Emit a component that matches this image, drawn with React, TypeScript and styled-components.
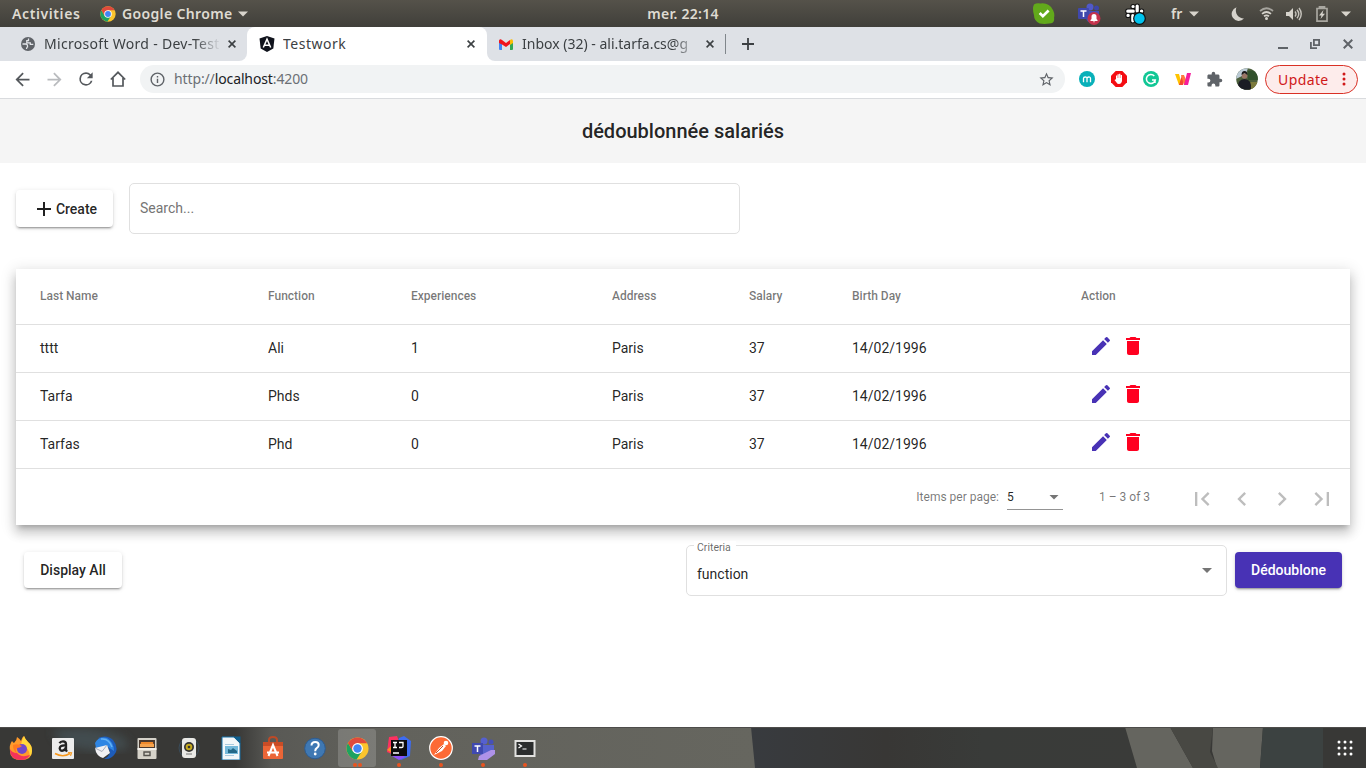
import React from "react";
import styled, { createGlobalStyle } from "styled-components";

const GlobalStyle = createGlobalStyle`
  * { box-sizing: border-box; }
  body { margin: 0; overflow: hidden; background: #fff; }
`;

const system = `"Noto Sans", "Open Sans", sans-serif`;

const Desktop = styled.div`
  width: 1366px;
  height: 768px;
  display: flex;
  flex-direction: column;
  font-family: Roboto, sans-serif;
  color: rgba(0, 0, 0, 0.87);
`;

const Icon = styled.svg<{ $ml?: number }>`
  display: block;
  flex: none;
  margin-left: ${(p) => p.$ml ?? 0}px;
`;

const Label = styled.span<{ $w?: number; $ml?: number; $ls?: number }>`
  flex: none;
  display: block;
  white-space: pre;
  width: ${(p) => (p.$w ? `${p.$w}px` : "auto")};
  margin-left: ${(p) => p.$ml ?? 0}px;
  letter-spacing: ${(p) => p.$ls ?? 0}px;
`;

/* ---------- desktop top bar ---------- */

const TopBar = styled.header`
  height: 27px;
  flex: none;
  display: grid;
  grid-template-columns: 1fr auto 1fr;
  align-items: center;
  background: linear-gradient(#55524a, #403f3a);
  color: #dfdbd2;
  font: 600 14px/26px ${system};
`;

const BarGroup = styled.div<{ $end?: boolean }>`
  display: flex;
  align-items: center;
  height: 27px;
  justify-content: ${(p) => (p.$end ? "flex-end" : "flex-start")};
  padding: ${(p) => (p.$end ? "0 15px 0 0" : "0 0 0 12px")};
`;

/* ---------- browser window ---------- */

const TabStrip = styled.div`
  height: 34px;
  flex: none;
  display: flex;
  background: #fff;
  color: #3c4043;
  font: 400 14px/34px ${system};
`;

const Tab = styled.div<{ $w: number; $active?: boolean; $side?: "before" | "after" }>`
  width: ${(p) => p.$w}px;
  height: 34px;
  flex: none;
  display: flex;
  align-items: center;
  background: ${(p) => (p.$active ? "#fff" : "#dee1e6")};
  border-radius: ${(p) => (p.$active ? "8px 8px 0 0" : p.$side === "before" ? "0 0 8px 0" : "0 0 0 8px")};
`;

const ActiveTabBacking = styled.div`
  display: flex;
  background: linear-gradient(#dee1e6 50%, #fff 50%);
`;

const StripRest = styled.div`
  flex: 1;
  display: flex;
  background: #dee1e6;
`;

const TabTitle = styled.span<{ $w: number; $ml: number; $ls?: number; $fade?: boolean }>`
  width: ${(p) => p.$w}px;
  margin-left: ${(p) => p.$ml}px;
  letter-spacing: ${(p) => p.$ls ?? 0}px;
  flex: none;
  overflow: hidden;
  white-space: nowrap;
  ${(p) => p.$fade && "mask-image: linear-gradient(90deg, #000 86%, transparent 101%);"}
`;

const TabDivider = styled.i`
  width: 1px;
  height: 20px;
  margin: 7px 0 0 7px;
  background: #80868b;
`;

const WindowButtons = styled.div`
  margin-left: auto;
  display: flex;
  align-items: center;
  padding-right: 13px;
`;

const Toolbar = styled.div`
  height: 38px;
  flex: none;
  display: flex;
  align-items: center;
  padding-bottom: 1px;
  border-bottom: 1px solid #d9dbde;
  background: #fff;
`;

const AddressBar = styled.div`
  width: 925px;
  height: 28px;
  margin-left: 14px;
  border-radius: 14px;
  background: #f1f3f4;
  display: flex;
  align-items: center;
  color: #6b6f74;
  font: 400 14px/28px ${system};
  b { font-weight: 400; color: #202124; }
`;

const UpdateButton = styled.div`
  width: 93px;
  height: 29px;
  margin-left: 7px;
  border: 1px solid #d93025;
  border-radius: 15px;
  background: #fdeceb;
  color: #d01818;
  display: flex;
  align-items: center;
  font: 400 14px/27px ${system};
`;

/* ---------- web page ---------- */

const PageTitle = styled.h1`
  height: 64px;
  flex: none;
  margin: 0;
  background: #f5f5f5;
  text-align: center;
  font: 500 20px/64px Roboto, sans-serif;
`;

const Page = styled.main`
  height: 564px;
  flex: none;
  padding: 20px 16px 0;
  background: #fff;
  font-size: 14px;
`;

const SearchRow = styled.div`
  display: flex;
  align-items: center;
  gap: 16px;
`;

const raised = `0 3px 1px -2px rgba(0,0,0,.2), 0 2px 2px 0 rgba(0,0,0,.14), 0 1px 5px 0 rgba(0,0,0,.12)`;

const Button = styled.button<{ $w: number; $h?: number; $primary?: boolean }>`
  width: ${(p) => p.$w}px;
  height: ${(p) => p.$h ?? 36}px;
  flex: none;
  display: flex;
  align-items: center;
  justify-content: center;
  padding: 0;
  border: 0;
  border-radius: 4px;
  background: ${(p) => (p.$primary ? "#4832b5" : "#fff")};
  color: ${(p) => (p.$primary ? "#fff" : "rgba(0,0,0,.87)")};
  box-shadow: ${raised};
  font: 500 14px/36px Roboto, sans-serif;
`;

const SearchField = styled.div`
  width: 611px;
  height: 51px;
  padding: 0 10px;
  border: 1px solid #e0e0e0;
  border-radius: 5px;
  line-height: 49px;
  color: #757575;
`;

const Card = styled.section`
  margin-top: 35px;
  height: 256px;
  background: #fff;
  box-shadow: 0 5px 5px -3px rgba(0,0,0,.2), 0 8px 10px 1px rgba(0,0,0,.14), 0 3px 14px 2px rgba(0,0,0,.12);
`;

const Row = styled.div<{ $head?: boolean }>`
  height: ${(p) => (p.$head ? 56 : 48)}px;
  display: grid;
  grid-template-columns: 228px 143px 201px 137px 103px 229px 1fr;
  align-items: center;
  padding: 0 24px 2px;
  border-bottom: 1px solid #e0e0e0;
  ${(p) => p.$head && "font-size: 12px; font-weight: 500; color: rgba(0,0,0,.54);"}
`;

const Actions = styled.div`
  display: flex;
  gap: 8px;
  padding: 0 0 4px 8px;
`;

const Paginator = styled.div`
  height: 56px;
  display: flex;
  align-items: center;
  justify-content: flex-end;
  padding-right: 14px;
  font-size: 12px;
  color: rgba(0, 0, 0, 0.54);
`;

const PageButtons = styled.div`
  display: flex;
  gap: 12px;
  padding: 4px 0 0 10px;
`;

const PageSize = styled.div`
  width: 56px;
  height: 25px;
  margin: 0 0 0 8px;
  display: flex;
  align-items: center;
  justify-content: space-between;
  padding: 1px 4px 0 0;
  border-bottom: 1px solid #949494;
  color: rgba(0, 0, 0, 0.87);
`;

const FooterRow = styled.div`
  display: flex;
  align-items: flex-start;
  padding: 27px 8px 0;
`;

const Select = styled.div`
  position: relative;
  width: 541px;
  height: 51px;
  margin: -7px 8px 0 auto;
  display: flex;
  align-items: center;
  justify-content: space-between;
  padding: 7px 14px 0 10px;
  border: 1px solid #e0e0e0;
  border-radius: 5px;
`;

const FloatingLabel = styled.span`
  position: absolute;
  left: 7px;
  top: -5px;
  width: 42px;
  padding-left: 3px;
  background: #fff;
  font-size: 10.5px;
  line-height: 14px;
  color: rgba(0, 0, 0, 0.6);
`;

const SelectArrow = styled.i<{ $up?: number }>`
  width: 10px;
  height: 5px;
  margin-bottom: ${(p) => p.$up ?? 0}px;
  background: #757575;
  clip-path: polygon(0 0, 100% 0, 50% 100%);
`;

/* ---------- dock ---------- */

const Dock = styled.footer`
  position: relative;
  height: 41px;
  flex: none;
  display: flex;
  gap: 4px;
  padding: 2px 0 0 2px;
  background: #383836;
`;

const Wallpaper = styled.svg`
  position: absolute;
  inset: 0;
`;

const DockSlot = styled.div<{ $active?: boolean }>`
  position: relative;
  width: 38px;
  height: 38px;
  display: flex;
  align-items: center;
  justify-content: center;
  border-radius: 3px;
  background: ${(p) => (p.$active ? "rgba(255,255,255,.17)" : "transparent")};
`;

const RunningDots = styled.div`
  position: absolute;
  left: 0;
  right: 0;
  bottom: 0;
  display: flex;
  justify-content: center;
  gap: 1px;
  i { width: 4px; height: 4px; border-radius: 2px; background: #e95420; }
`;

const AppsButton = styled.div`
  position: relative;
  margin: 11px 13px 0 auto;
`;

const Chrome = ({ size, ml }: { size: number; ml?: number }) => (
  <Icon $ml={ml} width={size} height={size} viewBox="0 0 48 48">
    <circle cx="24" cy="24" r="23" fill="#fbc52d" />
    <path d="M4.100 12.500A23 23 0 0 0 22 46.900L33 30 24 24 14 29z" fill="#1da261" />
    <path d="M4.100 12.500 14 29.500 24 13H44L43.900 12.500A23 23 0 0 0 4.100 12.500z" fill="#df4a3c" />
    <circle cx="24" cy="24" r="11.300" fill="#fff" />
    <circle cx="24" cy="24" r="8.800" fill="#4285f4" />
  </Icon>
);

const Caret = ({ ml }: { ml: number }) => (
  <Icon $ml={ml} width="10" height="6" viewBox="0 0 10 6">
    <path d="M0 .5h10L5 5.500z" fill="#d8d4cc" />
  </Icon>
);

const Close = ({ ml, size = 8, color = "#3c4043" }: { ml: number; size?: number; color?: string }) => (
  <Icon $ml={ml} width={size} height={size} viewBox="0 0 8 8">
    <path d="m.6.6 6.800 6.800m0-6.800L.6 7.400" stroke={color} strokeWidth="1.600" />
  </Icon>
);

const Glyph = ({ d, color, size = 24, ml }: { d: string; color: string; size?: number; ml?: number }) => (
  <Icon $ml={ml} width={size} height={size} viewBox="0 0 24 24">
    <path d={d} fill={color} />
  </Icon>
);

const paths = {
  back: "M20 11H7.830l5.590-5.590L12 4l-8 8 8 8 1.410-1.410L7.830 13H20v-2z",
  forward: "M12 4l-1.410 1.410L16.170 11H4v2h12.170l-5.580 5.590L12 20l8-8z",
  reload:
    "M17.650 6.350A7.960 7.960 0 0 0 12 4a8 8 0 1 0 7.730 10h-2.080A6 6 0 1 1 12 6c1.660 0 3.140.69 4.220 1.780L13 11h7V4l-2.350 2.350z",
  info: "M11 7h2v2h-2zm0 4h2v6h-2zm1-9a10 10 0 1 0 0 20 10 10 0 0 0 0-20zm0 18a8 8 0 1 1 0-16 8 8 0 0 1 0 16z",
  star: "M22 9.240l-7.190-.62L12 2 9.190 8.630 2 9.240l5.460 4.730L5.820 21 12 17.270 18.180 21l-1.630-7.030L22 9.240zM12 15.400l-3.760 2.270 1-4.280-3.320-2.880 4.380-.38L12 6.100l1.710 4.040 4.380.38-3.320 2.880 1 4.280L12 15.400z",
  puzzle:
    "M20.500 11H19V7c0-1.100-.9-2-2-2h-4V3.500a2.500 2.500 0 0 0-5 0V5H4c-1.100 0-2 .9-2 2v3.800h1.500a2.700 2.700 0 0 1 0 5.400H2V20c0 1.100.9 2 2 2h3.800v-1.500a2.700 2.700 0 0 1 5.400 0V22H17c1.100 0 2-.9 2-2v-4h1.500a2.500 2.500 0 0 0 0-5z",
  plus: "M19 13h-6v6h-2v-6H5v-2h6V5h2v6h6v2z",
  edit: "M3 17.250V21h3.750L17.810 9.940l-3.750-3.750L3 17.250zM20.710 7.040a1 1 0 0 0 0-1.410l-2.340-2.340a1 1 0 0 0-1.410 0l-1.830 1.830 3.750 3.750 1.830-1.830z",
  trash: "M6 19c0 1.100.9 2 2 2h8c1.100 0 2-.9 2-2V7H6v12zM19 4h-3.500l-1-1h-5l-1 1H5v2h14V4z",
  first: "M18.410 16.590L13.820 12l4.590-4.590L17 6l-6 6 6 6zM6 6h2v12H6z",
  prev: "M15.410 7.410L14 6l-6 6 6 6 1.410-1.410L10.830 12z",
  next: "M10 6L8.590 7.410 13.170 12l-4.580 4.590L10 18l6-6z",
  last: "M5.590 7.410L10.180 12l-4.590 4.590L7 18l6-6-6-6zM16 6h2v12h-2z",
};

const TrayIcons = () => (
  <>
    <Icon width="22" height="23" viewBox="0 0 23 23">
      <path d="M1 2Q4 0 8 1q9-1 13 7 2 4 1 8 1 6-5 6-5 1-10 0-6-3-6-9Q-1 6 1 2z" fill="#62a91b" />
      <path d="m7 11 3.300 3.300 6-6" fill="none" stroke="#fff" strokeWidth="2.800" />
    </Icon>
    <Icon $ml={23} width="23" height="22" viewBox="0 0 23 22">
      <circle cx="12" cy="4" r="3.500" fill="#5059c9" />
      <circle cx="18.500" cy="5" r="2.500" fill="#3d46a8" />
      <path d="M8 8h13v6q-2 6-8 6-5-1-5-6z" fill="#4450b5" />
      <rect y="5" width="11" height="11" rx="1" fill="#4048ad" />
      <path d="M2.500 8h6M5.500 8v6" stroke="#fff" strokeWidth="1.500" />
      <circle cx="16" cy="15.500" r="6.500" fill="#c4314b" />
      <path d="M12.500 18v-1l1-1v-2.500a2.500 2.500 0 0 1 5 0V16l1 1v1zm2.300.6h2.400l-1.200 1z" fill="#fff" />
    </Icon>
    <Icon $ml={24} width="22" height="22" viewBox="0 0 22 22">
      {["#111", "#fff"].map((c, i) => (
        <path
          key={c}
          d="M2.800 8.200h5.400M8 3.500h.1M12.200 3v5M16.500 8.200h.2M3 12.400h.2M7.800 12.600v5.200M12 12.500h5"
          stroke={c}
          strokeWidth={i ? 3.200 : 5.200}
          strokeLinecap="round"
        />
      ))}
      <circle cx="14.500" cy="15.500" r="5.800" fill="#00c3ee" stroke="#111" strokeWidth="1.200" />
    </Icon>
  </>
);

const StatusIcons = () => (
  <>
    <Icon $ml={32} width="13" height="14" viewBox="0 0 13 14">
      <path d="M5.500.3A7 7 0 1 0 13 11.500 8 8 0 0 1 5.500.3z" fill="#d6d3cc" />
    </Icon>
    <Icon $ml={15} width="15" height="13" viewBox="0 0 15 13" fill="none" strokeWidth="1.700">
      <path d="M1 4q6.500-5.500 13 0" stroke="#a5a39d" />
      <path d="M3 6.800q4.500-3.600 9 0M5 9.200q2.500-1.800 5 0" stroke="#d6d3cc" />
      <circle cx="7.500" cy="11.400" r="1.500" fill="#d6d3cc" />
    </Icon>
    <Icon $ml={12} width="16" height="14" viewBox="0 0 16 14">
      <path d="M0 5h3l4-4v12L3 9H0z" fill="#d6d3cc" />
      <path d="M9 4.500q2 2.500 0 5M11 2.800q3.500 4.200 0 8.400M13 1q4.500 6 0 12" fill="none" stroke="#c6c3bc" strokeWidth="1.400" />
    </Icon>
    <Icon $ml={14} width="12" height="16" viewBox="0 0 12 16">
      <path d="M3.500 2V.8h5V2M1 2.500h10v12.700H1z" fill="none" stroke="#a9a7a0" strokeWidth="1.700" />
      <path d="M7.500 4 3 9.500h2.500L4.500 13 9 7.800H6.500z" fill="#d6d3cc" />
    </Icon>
  </>
);

const Extensions = () => (
  <>
    <Icon $ml={14} width="16" height="16" viewBox="0 0 16 16">
      <circle cx="8" cy="8" r="8" fill="#08b0b9" />
      <path d="M4.500 11.300V7.300Q4.500 6 6.300 6T8 7.500v3.800M8 7.500Q8 6 9.800 6t1.700 1.500v3.800" fill="none" stroke="#fff" strokeWidth="1.300" />
    </Icon>
    <Icon $ml={16} width="16" height="16" viewBox="0 0 16 16">
      <path d="M4.700 0h6.600L16 4.700v6.600L11.300 16H4.700L0 11.300V4.700z" fill="#f40d12" />
      <path d="M5 8V4.500h1.200V7h.3V3.300h1.300V7h.3V2.800h1.300V7h.3V4h1.300v6q-.6 3-3 3-1.800 0-2.500-1.500L3.500 9l1-.6z" fill="#fff" />
    </Icon>
    <Icon $ml={16} width="16" height="16" viewBox="0 0 16 16">
      <circle cx="8" cy="8" r="8" fill="#11c795" />
      <path d="M11.300 5A4.500 4.500 0 1 0 12.300 9H9M12 8.800V12" fill="none" stroke="#fff" strokeWidth="1.500" />
    </Icon>
    <Icon $ml={16} width="16" height="13" viewBox="0 0 16 13">
      <path d="M0 1h4l3 11H4z" fill="#ffc400" />
      <path d="M4 12 7 2l2.500 3L8 12z" fill="#f4472e" />
      <path d="M6 2h3l4 10H9z" fill="#ff7a3c" />
      <path d="M12 0h4l-3 12H9z" fill="#f51d9c" />
    </Icon>
    <Glyph ml={15} size={17} d={paths.puzzle} color="#5f6368" />
    <Icon $ml={13} width="22" height="22" viewBox="0 0 22 22">
      <clipPath id="avatar"><circle cx="11" cy="11" r="10.800" /></clipPath>
      <g clipPath="url(#avatar)">
        <path d="M0 0h22v22H0z" fill="#4c5f3c" />
        <path d="M0 0h12l-2 6-10 5z" fill="#bccbd6" />
        <path d="M12 3q6-2 10 4v5H12z" fill="#31512c" />
        <path d="M13 14h9v8h-9z" fill="#7d7b3d" />
        <circle cx="8.500" cy="8" r="2.800" fill="#9a7566" />
        <path d="M5.500 7q0-4 3-4t3 4l-3-2z" fill="#1d1b1c" />
        <path d="M2 22q-1-11 6.500-11T15 22z" fill="#1b1c24" />
      </g>
    </Icon>
  </>
);

const dockIcons: { art: React.ReactNode; dots?: number; active?: boolean }[] = [
  {
    art: (
      <>
        <path d="M3 5q1 1.500 2 2 3-3 3-6 3 2 4 4 1-4 3-5 1 3 4 6 4 3 4 9 0 9-11 9T1 15Q0 9 3 5z" fill="#ff9a2b" />
        <path d="M15 0q1 3 4 6 4 3 4 9 0 3-2 5-1-9-9-11 1-6 3-9z" fill="#ffd83b" />
        <path d="M1 13q0 11 11 11 6 0 9-5-9 3-13-2-5 0-7-4z" fill="#f4335b" />
        <circle cx="13" cy="13" r="5" fill="#7048c9" />
        <path d="M4 9q5-2 9 1-2 2-5 2-2 3 0 5-4-2-4-8z" fill="#ff7a20" />
      </>
    ),
  },
  {
    art: (
      <>
        <rect x="1" y="2" width="22" height="21" rx="1" fill="#ececec" />
        <path d="M8.500 7.300q1-2 3.500-2 3 0 3 3v6l1 1.300M15 9.500q-6-.5-6.300 2.800.4 2.800 3 2.400Q14.500 14 15 11" fill="none" stroke="#222" strokeWidth="2.300" />
        <path d="M4 17.500q8 4.500 15 0" fill="none" stroke="#f7981d" strokeWidth="1.600" />
        <path d="m17 16.500 3.500.2-1 3" fill="none" stroke="#f7981d" strokeWidth="1.200" />
      </>
    ),
  },
  {
    art: (
      <>
        <path d="M5 2Q14-2 20 4q5 6 3 12-4 8-12 7 5-2 6-7-4-12-12-14z" fill="#1d5cba" />
        <path d="M2 7q4-7 12-5 7 4 7 13l-6-4-12 1z" fill="#2f86e4" />
        <path d="M8 3q8-1 11 8" fill="none" stroke="#64b2f5" strokeWidth="1.500" />
        <path d="M2 12 14 9l3 8-7 5q-7-2-8-10z" fill="#f0f0f3" />
        <path d="m2 12 7 3.500L14 9" fill="none" stroke="#a9adba" />
      </>
    ),
  },
  {
    art: (
      <>
        <rect x="2.500" y="2" width="19" height="21" rx="1" fill="#d5d2c9" />
        <path d="M4 4h16v8H4z" fill="#4a392e" />
        <path d="M6 6h12l1 5H5z" fill="#f08a2c" />
        <path d="M5 8h14v3H5z" fill="#f5a34e" />
        <path d="M2.500 12h19v2h-19z" fill="#f3f1eb" />
        <path d="M9 16h6v3.500H9z" fill="none" stroke="#55534e" strokeWidth="1.400" />
      </>
    ),
  },
  {
    art: (
      <>
        <circle cx="12" cy="12" r="10" fill="none" stroke="#394c5b" />
        <rect x="5" y="2" width="14" height="20" rx="3" fill="#e9e9e6" />
        <circle cx="12" cy="11" r="5" fill="#333" />
        <circle cx="12" cy="11" r="3.300" fill="#c5a91e" />
        <circle cx="12" cy="11" r="1.300" fill="#333" />
        <path d="M9 18h6" stroke="#777" />
      </>
    ),
  },
  {
    art: (
      <>
        <path d="M3 1h12l6 6v17H3z" fill="#f3f7f9" stroke="#1673aa" />
        <path d="M14 .5h7.500V8z" fill="#10608f" />
        <path d="M6 8.500h9M6 19.500h9" stroke="#a9cade" />
        <rect x="6" y="10" width="13" height="8" fill="#75b9da" />
        <path d="M9 17v-4l3 1 2-2 4 3v2z" fill="#246887" />
      </>
    ),
  },
  {
    art: (
      <>
        <path d="M8 6V4q0-3 4-3t4 3v2" fill="none" stroke="#bd4a27" strokeWidth="2" />
        <path d="M2 6h20v16q0 1-1 1H3q-1 0-1-1z" fill="#eb6536" />
        <path d="M2 6h20v4H2z" fill="#c94c26" />
        <path d="m7.500 20 4.500-11 4.500 11M6 16.500h12" fill="none" stroke="#fff" strokeWidth="2" />
      </>
    ),
  },
  {
    art: (
      <>
        <circle cx="12" cy="12.500" r="10.300" fill="#3f78b3" stroke="#2d5c92" />
        <path d="M8.500 9.500q0-3.500 3.700-3.500 3.500 0 3.500 3 0 2-2 3.200-1.500 1-1.500 3" fill="none" stroke="#fff" strokeWidth="2" />
        <circle cx="12.200" cy="18" r="1.400" fill="#fff" />
      </>
    ),
  },
  { art: null, dots: 2, active: true },
  {
    art: (
      <>
        <path d="M2 1 10 0l4 10-7 9-7-3z" fill="#fc3160" />
        <path d="m12 2 5-2 7 5-1 15-9 4-6-5z" fill="#3d6cf2" />
        <path d="m5 20 6-5 7 6-6 3z" fill="#8c4ff8" />
        <path d="m0 14 5-5v8z" fill="#fb8a2a" />
        <path d="M4 4h16v16H4z" fill="#0b0b0d" />
        <path d="M6 6.500h4M8 6.500v5M6 11.500h4M12 6.500h4v4q0 1-1.500 1H12M6 17h6" fill="none" stroke="#fff" strokeWidth="1.300" />
      </>
    ),
    dots: 1,
  },
  {
    art: (
      <>
        <circle cx="12" cy="12" r="11.300" fill="#fd6a35" stroke="#fff" strokeWidth="1.200" />
        <path d="m5 19 5-7 5-4 2 2-4 5z" fill="#fff" />
        <path d="m7 17 7-7" stroke="#c9502a" />
        <circle cx="17" cy="7" r="2.300" fill="#fff" />
      </>
    ),
    dots: 1,
  },
  {
    art: (
      <>
        <circle cx="13" cy="5" r="3.500" fill="#5560cf" />
        <circle cx="20" cy="6" r="2.500" fill="#4650b8" />
        <path d="M9 9h14v9q-3 4-9 4-5-1-5-5z" fill="#5762cc" />
        <path d="M1 7h11v11H1z" fill="#3f49b0" />
        <path d="M3.500 10h6M6.500 10v6" stroke="#fff" strokeWidth="1.500" />
        <path d="m8 20 12-6h4v4l-8 6H7z" fill="#ae92e8" />
      </>
    ),
    dots: 1,
  },
  {
    art: (
      <>
        <path d="M1.500 4h21v17h-21z" fill="#e2e2e0" />
        <path d="M3.500 6h17v13h-17z" fill="#2b2d2d" />
        <path d="m5.500 8 3 2-3 2M9.500 13h4" fill="none" stroke="#fff" strokeWidth="1.200" />
      </>
    ),
    dots: 1,
  },
];

const headers = ["Last Name", "Function", "Experiences", "Address", "Salary", "Birth Day", "Action"];
const people = [
  ["tttt", "Ali", "1", "Paris", "37", "14/02/1996"],
  ["Tarfa", "Phds", "0", "Paris", "37", "14/02/1996"],
  ["Tarfas", "Phd", "0", "Paris", "37", "14/02/1996"],
];

export default function App() {
  return (
    <Desktop>
      <GlobalStyle />
      <TopBar>
        <BarGroup>
          <Label $w={88} $ls={0.6}>Activities</Label>
          <Chrome size={16} />
          <Label $ml={6} $w={111} $ls={0.35}>Google Chrome</Label>
          <Caret ml={5} />
        </BarGroup>
        <Label $ls={0.25}>mer. 22:14</Label>
        <BarGroup $end>
          <TrayIcons />
          <Label $ml={24} $w={14}>fr</Label>
          <Caret ml={4} />
          <StatusIcons />
          <Caret ml={13} />
        </BarGroup>
      </TopBar>

      <TabStrip>
        <Tab $w={247} $side="before">
          <Icon $ml={21} width="14" height="14" viewBox="0 0 14 14">
            <circle cx="7" cy="7" r="7" fill="#5f6368" />
            <path d="M1.500 7h3.200q1.800.2 1.800 1.800V10q-1 .3-1 2M7.500 1.500v2.200H5.800v2.100h3.500v1.500h3" fill="none" stroke="#e4e6ea" strokeWidth="1.300" />
          </Icon>
          <TabTitle $ml={9} $w={175} $ls={0.3} $fade>Microsoft Word - Dev-Test</TabTitle>
          <Close ml={9} />
        </Tab>
        <ActiveTabBacking>
          <Tab $w={240} $active>
            <Icon $ml={12} width="16" height="16" viewBox="0 0 16 16">
              <path d="M8 0l7.500 2.600-1.200 10L8 16l-6.300-3.400L.5 2.600z" fill="#10131c" />
              <path d="M4.300 11.500 8 3.200l3.700 8.300M5.800 9.300h4.400" fill="none" stroke="#fff" strokeWidth="1.500" />
            </Icon>
            <TabTitle $ml={8} $w={175} $ls={0.5}>Testwork</TabTitle>
            <Close ml={9} />
          </Tab>
        </ActiveTabBacking>
        <Tab $w={231} $side="after">
          <Icon $ml={12} width="14" height="11" viewBox="0 0 14 11">
            <path d="M0 2h3v9H1q-1 0-1-1z" fill="#4285f4" />
            <path d="M11 2h3v8q0 1-1 1h-2z" fill="#34a853" />
            <path d="M0 4V1.500Q1-.5 3 1l4 3 4-3v4L7 8 3 5.500z" fill="#f0141e" />
            <path d="M11 1q2-1.500 3 .5V4l-3 2z" fill="#fbbc04" />
          </Icon>
          <TabTitle $ml={9} $w={175} $fade>Inbox (32) - ali.tarfa.cs@g</TabTitle>
          <Close ml={9} />
        </Tab>
        <StripRest>
          <TabDivider />
          <Icon $ml={16} width="12" height="34" viewBox="0 0 12 34">
            <path d="M0 17h12M6 11v12" stroke="#3c4043" strokeWidth="1.800" />
          </Icon>
          <WindowButtons>
            <Icon width="10" height="12" viewBox="0 0 10 12"><path d="M0 10h10" stroke="#5f6368" strokeWidth="2" /></Icon>
            <Icon $ml={22} width="10" height="10" viewBox="0 0 10 10" fill="none" stroke="#5f6368" strokeWidth="1.800">
              <path d="M3.900.9h5.200v5.200H3.900zM.9 3v6.100H7" />
            </Icon>
            <Close ml={23} size={10} color="#5f6368" />
          </WindowButtons>
        </StripRest>
      </TabStrip>

      <Toolbar>
        <Glyph ml={12} size={21} d={paths.back} color="#54585c" />
        <Glyph ml={11} size={21} d={paths.forward} color="#b9bbbe" />
        <Glyph ml={11} size={20} d={paths.reload} color="#54585c" />
        <Icon $ml={14} width="16" height="16" viewBox="0 0 16 16">
          <path d="M.8 8.500 8 1.300l7.200 7.200M3 7v8h10V7" fill="none" stroke="#54585c" strokeWidth="1.700" />
        </Icon>
        <AddressBar>
          <Glyph ml={9} size={17} d={paths.info} color="#5f6368" />
          <Label $ml={8} $w={857} $ls={-0.12}>http://<b>localhost</b>:4200</Label>
          <Glyph ml={7} size={17} d={paths.star} color="#5f6368" />
        </AddressBar>
        <Extensions />
        <UpdateButton>
          <Label $ml={12} $w={51} $ls={0.4}>Update</Label>
          <Icon $ml={13} width="4" height="14" viewBox="0 0 4 14" fill="#d01818">
            <circle cx="2" cy="2" r="1.500" /><circle cx="2" cy="7" r="1.500" /><circle cx="2" cy="12" r="1.500" />
          </Icon>
        </UpdateButton>
      </Toolbar>

      <PageTitle>dédoublonnée salariés</PageTitle>
      <Page>
        <SearchRow>
          <Button $w={97} $h={37}>
            <Glyph size={24} d={paths.plus} color="rgba(0,0,0,.87)" />
            Create
          </Button>
          <SearchField>Search...</SearchField>
        </SearchRow>

        <Card>
          <Row $head>{headers.map((h) => <span key={h}>{h}</span>)}</Row>
          {people.map((person) => (
            <Row key={person[0]}>
              {person.map((value, i) => <span key={i}>{value}</span>)}
              <Actions>
                <Glyph d={paths.edit} color="#4832b5" />
                <Glyph d={paths.trash} color="#ff0020" />
              </Actions>
            </Row>
          ))}
          <Paginator>
            <Label>Items per page:</Label>
            <PageSize>5<SelectArrow /></PageSize>
            <Label $ml={36} $w={79}>1 – 3 of 3</Label>
            <PageButtons>
              <Glyph size={28} d={paths.first} color="#bdbdbd" />
              <Glyph size={28} d={paths.prev} color="#bdbdbd" />
              <Glyph size={28} d={paths.next} color="#bdbdbd" />
              <Glyph size={28} d={paths.last} color="#bdbdbd" />
            </PageButtons>
          </Paginator>
        </Card>

        <FooterRow>
          <Button $w={98}>Display All</Button>
          <Select>
            <FloatingLabel>Criteria</FloatingLabel>
            function
            <SelectArrow $up={7} />
          </Select>
          <Button $w={107} $primary>Dédoublone</Button>
        </FooterRow>
      </Page>

      <Dock>
        <Wallpaper width="1366" height="41" viewBox="0 0 1366 41">
          <defs>
            <linearGradient id="shade">
              <stop offset="0" stopColor="#383836" />
              <stop offset=".07" stopColor="#595955" />
              <stop offset=".3" stopColor="#62625c" />
              <stop offset="1" stopColor="#66665f" />
            </linearGradient>
            <linearGradient id="night">
              <stop offset="0" stopColor="#383b3f" />
              <stop offset=".35" stopColor="#383735" />
              <stop offset=".6" stopColor="#393b39" />
              <stop offset="1" stopColor="#3a3b39" />
            </linearGradient>
            <filter id="soft"><feGaussianBlur stdDeviation="5" /></filter>
          </defs>
          <path d="M52 4q40-8 70 6 20 14-20 14T52 4z" fill="#46545a" opacity=".7" filter="url(#soft)" />
          <path d="M235 0h517l4 41H235z" fill="url(#shade)" />
          <path d="M751 0h374l12 41H755z" fill="url(#night)" />
          <path d="M1125 0h45l23 41h-56zM1213 0h50l-3 41h-43l-5-17z" fill="#65655f" />
          <path d="M1170 0h43l-3 25 8 16h-25z" fill="#484843" />
          <path d="M1263 0h60v41h-63z" fill="#3c4241" />
          <path d="M0 .5h1366" stroke="#4d4c4a" />
        </Wallpaper>
        {dockIcons.map((item, i) => (
          <DockSlot key={i} $active={item.active}>
            {item.active ? <Chrome size={23} /> : <Icon width="24" height="24" viewBox="0 0 24 24">{item.art}</Icon>}
            {item.dots && (
              <RunningDots>
                {Array.from({ length: item.dots }, (_, n) => <i key={n} />)}
              </RunningDots>
            )}
          </DockSlot>
        ))}
        <AppsButton>
          <Icon width="16" height="16" viewBox="0 0 16 16" fill="#fff">
            {[2, 8, 14].map((y) => [2, 8, 14].map((x) => <circle key={`${x}-${y}`} cx={x} cy={y} r="1.500" />))}
          </Icon>
        </AppsButton>
      </Dock>
    </Desktop>
  );
}
